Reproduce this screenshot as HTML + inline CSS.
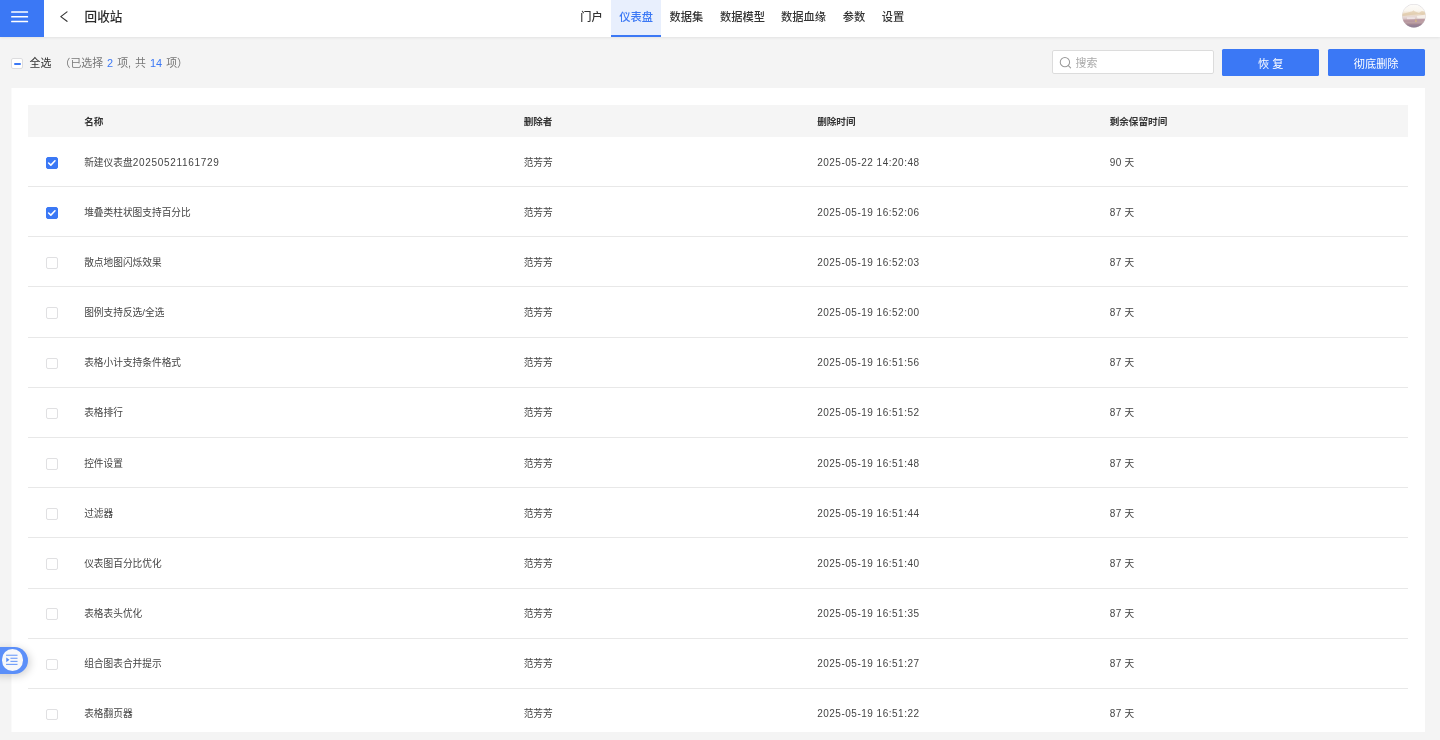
<!DOCTYPE html>
<html lang="zh-CN">
<head>
<meta charset="utf-8">
<title>回收站</title>
<style>
html,body{margin:0;padding:0;}
body{width:1440px;height:740px;overflow:hidden;background:#f4f4f4;position:relative;
 font-family:"Liberation Sans","Noto Sans CJK SC",sans-serif;color:#333;font-size:10px;line-height:1;-webkit-font-smoothing:antialiased;}
.l{font-family:"Liberation Sans",sans-serif;letter-spacing:.5px;}
.row .l{font-size:10px;}
.row .c1 .l{letter-spacing:.69px;}
.nav{position:absolute;left:0;top:0;width:1440px;height:36.8px;background:#fff;box-shadow:0 1px 2.5px rgba(0,0,0,.075);}
.burger{position:absolute;left:0;top:0;width:43.8px;height:36.8px;background:#3b78f5;}
.burger svg{position:absolute;left:0;top:0;display:block;}
.back{position:absolute;left:58px;top:9px;width:12px;height:16px;}
.title{position:absolute;left:84.6px;top:0;height:34.6px;line-height:34.6px;font-size:12.6px;font-weight:500;color:#2b2b2b;}
.tab{position:absolute;top:0;height:36.8px;line-height:35.2px;font-size:11.25px;font-weight:500;color:#333;white-space:nowrap;text-align:center;}
.tab.on{color:#3b78f5;background:#e8effd;box-shadow:inset 0 -2px 0 #3b78f5;}
.avatar{position:absolute;left:1402.4px;top:4.1px;width:23.8px;height:23.8px;}
.ind{position:absolute;left:11.4px;top:57.7px;width:9.2px;height:9.2px;border:1px solid #dcdcde;border-radius:2px;background:#fff;box-sizing:content-box;}
.ind:after{content:"";position:absolute;left:1.5px;top:3.9px;width:6.9px;height:2px;background:#3b78f5;border-radius:1px;}
.all{position:absolute;left:29.6px;top:55.6px;font-size:10.9px;line-height:14px;color:#333;}
.sel{position:absolute;left:59.5px;top:55.6px;word-spacing:1px;font-size:10.9px;line-height:14px;color:#777;white-space:nowrap;}
.sel b{font-weight:400;color:#3b78f5;}
.search{position:absolute;left:1052.3px;top:49.8px;width:159.8px;height:22.6px;border:1px solid #dcdcdc;border-radius:2px;background:#fff;}
.search svg{position:absolute;left:5.6px;top:5.6px;width:13.5px;height:13.5px;}
.search span{position:absolute;left:22.3px;top:1px;line-height:22.6px;font-size:10.9px;color:#aaa;}
.btn{position:absolute;top:49.4px;height:26.2px;width:97px;background:#3b78f5;color:#fff;font-size:11.2px;line-height:30.4px;text-align:center;border-radius:1.5px;}
.card{position:absolute;left:12px;top:88px;width:1413px;height:644px;background:#fff;overflow:hidden;box-shadow:-1px 0 0 #fafafa;}
.thead{position:absolute;left:15.7px;top:17px;width:1380.6px;height:31.7px;background:#f5f5f5;font-weight:700;color:#333;font-size:9.6px;line-height:33px;}
.thead span{position:absolute;top:0;}
.row{position:absolute;left:15.7px;width:1380.6px;height:50.195px;line-height:50.8px;font-size:9.7px;box-shadow:inset 0 -1px 0 #e8e8e8;color:#444;white-space:nowrap;}
.row>span{position:absolute;top:0;}
.c1{left:56.5px;}.c2{left:496px;}.c3{left:789.5px;}.c4{left:1082px;}
.row .cb{left:18.4px;top:20.6px;width:9.6px;height:9.6px;border:1px solid #e0e0e2;border-radius:2px;background:#fff;}
.row .cb.on{background:#3b78f5;border-color:#3b78f5;}
.cb svg{position:absolute;left:-1px;top:-1px;width:11.6px;height:11.6px;display:block;}
.float{position:absolute;left:-14px;top:646.5px;width:42px;height:27.6px;border-radius:14px;background:#5b8ff9;box-shadow:2px 2px 8px rgba(0,0,0,.18);}
.float .c{position:absolute;left:15.5px;top:2.8px;width:21.6px;height:21.6px;border-radius:50%;background:#f7f8fa;}
.float svg{position:absolute;left:3.8px;top:4px;width:13.6px;height:13.6px;}
#app{position:absolute;left:0;top:0;width:1440px;height:740px;will-change:transform;}
</style>
</head>
<body>
<div id="app">
<div class="nav">
 <div class="burger"><svg width="44" height="37" viewBox="0 0 44 37"><g fill="#fff"><rect x="11.1" y="11.2" width="17" height="1.6" rx=".5"/><rect x="11.1" y="15.9" width="17" height="1.5" rx=".5"/><rect x="11.1" y="20.65" width="17" height="1.5" rx=".5"/></g></svg></div>
 <svg class="back" viewBox="0 0 12 16"><path d="M9 2.9 L2.8 7.6 L9 12.3" fill="none" stroke="#333" stroke-width="1.15" stroke-linecap="round" stroke-linejoin="round"/></svg>
 <div class="title">回收站</div>
 <div class="tab" style="left:572px;width:39px">门户</div>
 <div class="tab on" style="left:611px;width:50.3px">仪表盘</div>
 <div class="tab" style="left:661.3px;width:50.3px">数据集</div>
 <div class="tab" style="left:711.6px;width:62px">数据模型</div>
 <div class="tab" style="left:773.6px;width:60px">数据血缘</div>
 <div class="tab" style="left:834px;width:40px">参数</div>
 <div class="tab" style="left:873px;width:40px">设置</div>
 <svg class="avatar" viewBox="0 0 24 24"><defs><linearGradient id="ag" x1="0" y1="0" x2="0" y2="1"><stop offset="0" stop-color="#fdfcfa"/><stop offset=".28" stop-color="#faf6f0"/><stop offset=".42" stop-color="#ecdcc6"/><stop offset=".55" stop-color="#e6d8d6"/><stop offset=".7" stop-color="#cdb4b6"/><stop offset=".86" stop-color="#a88a92"/><stop offset="1" stop-color="#93808f"/></linearGradient><clipPath id="ac"><circle cx="12" cy="12" r="11.6"/></clipPath><filter id="ab" x="-20%" y="-20%" width="140%" height="140%"><feGaussianBlur stdDeviation=".7"/></filter></defs><circle cx="12" cy="12" r="11.9" fill="#d9d6da"/><g clip-path="url(#ac)"><rect width="24" height="24" fill="url(#ag)"/><g filter="url(#ab)"><path d="M0 10 L6 8.6 L10.5 7.4 L11.5 6.2 L12.6 7.4 L17 9 L20 7 L24 8 V11.5 L17 10.4 L9 11.2 L0 12.4Z" fill="#dcc4a2" opacity=".6"/><path d="M15 12 L24 10.6 V14.6 L15.5 14.4Z" fill="#f6efe9"/><path d="M5 13.4 H13 V15.4 H5Z" fill="#efe4e6" opacity=".9"/><path d="M0 16 L24 14.8 V17.6 L0 18.4Z" fill="#b2909a" opacity=".7"/><path d="M13.4 15.6 L14.6 15.6 L14.9 18.2 L13.2 18.2Z" fill="#e6c86a" opacity=".6"/><path d="M2 21 L22 20.4 L20 24 L4 24Z" fill="#85789a" opacity=".4"/></g></g></svg>
</div>
<div class="ind"></div>
<div class="all">全选</div>
<div class="sel">（已选择 <b class="n">2</b> 项, 共 <b class="n">14</b> 项）</div>
<div class="search"><svg viewBox="0 0 13 13"><circle cx="5.7" cy="5.9" r="4.5" fill="none" stroke="#9a9a9a" stroke-width="1"/><path d="M9 9.2 L11.2 11.4" stroke="#9a9a9a" stroke-width="1" stroke-linecap="round"/></svg><span>搜索</span></div>
<div class="btn" style="left:1222.3px">恢 复</div>
<div class="btn" style="left:1327.7px">彻底删除</div>
<div class="card">
<div class="thead"><span class="c1">名称</span><span class="c2">删除者</span><span class="c3">删除时间</span><span class="c4">剩余保留时间</span></div>
<div class="row" style="top:48.86px;line-height:51.0px"><span class="cb on" style="top:20.09px"><svg viewBox="0 0 12 12"><path d="M2.7 6.2 L5 8.4 L9.3 3.9" fill="none" stroke="#fff" stroke-width="1.6" stroke-linecap="round" stroke-linejoin="round"/></svg></span><span class="c1">新建仪表盘<span class="l">20250521161729</span></span><span class="c2">范芳芳</span><span class="c3"><span class="l">2025-05-22 14:20:48</span></span><span class="c4"><span class="l">90</span> 天</span></div>
<div class="row" style="top:99.06px;line-height:51.0px"><span class="cb on" style="top:20.06px"><svg viewBox="0 0 12 12"><path d="M2.7 6.2 L5 8.4 L9.3 3.9" fill="none" stroke="#fff" stroke-width="1.6" stroke-linecap="round" stroke-linejoin="round"/></svg></span><span class="c1">堆叠类柱状图支持百分比</span><span class="c2">范芳芳</span><span class="c3"><span class="l">2025-05-19 16:52:06</span></span><span class="c4"><span class="l">87</span> 天</span></div>
<div class="row" style="top:149.25px;line-height:51.0px"><span class="cb" style="top:20.04px"></span><span class="c1">散点地图闪烁效果</span><span class="c2">范芳芳</span><span class="c3"><span class="l">2025-05-19 16:52:03</span></span><span class="c4"><span class="l">87</span> 天</span></div>
<div class="row" style="top:199.45px;line-height:51.0px"><span class="cb" style="top:20.01px"></span><span class="c1">图例支持反选/全选</span><span class="c2">范芳芳</span><span class="c3"><span class="l">2025-05-19 16:52:00</span></span><span class="c4"><span class="l">87</span> 天</span></div>
<div class="row" style="top:249.64px;line-height:49.0px"><span class="cb" style="top:19.99px"></span><span class="c1">表格小计支持条件格式</span><span class="c2">范芳芳</span><span class="c3"><span class="l">2025-05-19 16:51:56</span></span><span class="c4"><span class="l">87</span> 天</span></div>
<div class="row" style="top:299.84px;line-height:49.0px"><span class="cb" style="top:19.96px"></span><span class="c1">表格排行</span><span class="c2">范芳芳</span><span class="c3"><span class="l">2025-05-19 16:51:52</span></span><span class="c4"><span class="l">87</span> 天</span></div>
<div class="row" style="top:350.03px;line-height:51.0px"><span class="cb" style="top:19.94px"></span><span class="c1">控件设置</span><span class="c2">范芳芳</span><span class="c3"><span class="l">2025-05-19 16:51:48</span></span><span class="c4"><span class="l">87</span> 天</span></div>
<div class="row" style="top:400.23px;line-height:51.0px"><span class="cb" style="top:19.92px"></span><span class="c1">过滤器</span><span class="c2">范芳芳</span><span class="c3"><span class="l">2025-05-19 16:51:44</span></span><span class="c4"><span class="l">87</span> 天</span></div>
<div class="row" style="top:450.42px;line-height:51.0px"><span class="cb" style="top:19.89px"></span><span class="c1">仪表图百分比优化</span><span class="c2">范芳芳</span><span class="c3"><span class="l">2025-05-19 16:51:40</span></span><span class="c4"><span class="l">87</span> 天</span></div>
<div class="row" style="top:500.62px;line-height:49.0px"><span class="cb" style="top:19.87px"></span><span class="c1">表格表头优化</span><span class="c2">范芳芳</span><span class="c3"><span class="l">2025-05-19 16:51:35</span></span><span class="c4"><span class="l">87</span> 天</span></div>
<div class="row" style="top:550.81px;line-height:49.0px"><span class="cb" style="top:19.84px"></span><span class="c1">组合图表合并提示</span><span class="c2">范芳芳</span><span class="c3"><span class="l">2025-05-19 16:51:27</span></span><span class="c4"><span class="l">87</span> 天</span></div>
<div class="row" style="top:601.00px;line-height:49.0px"><span class="cb" style="top:19.82px"></span><span class="c1">表格翻页器</span><span class="c2">范芳芳</span><span class="c3"><span class="l">2025-05-19 16:51:22</span></span><span class="c4"><span class="l">87</span> 天</span></div>
</div>
<div class="float"><div class="c"><svg viewBox="0 0 14 14"><g stroke="#5b8ff9" stroke-width="1" stroke-linecap="round" fill="none"><path d="M1.5 2.3 H12.5"/><path d="M6 5.4 H12.5"/><path d="M6 8.6 H12.5"/><path d="M1.5 11.7 H12.5"/></g><path d="M1.3 4.6 L4.6 7 L1.3 9.4 Z" fill="#5b8ff9"/></svg></div></div>
</div>
</body>
</html>
